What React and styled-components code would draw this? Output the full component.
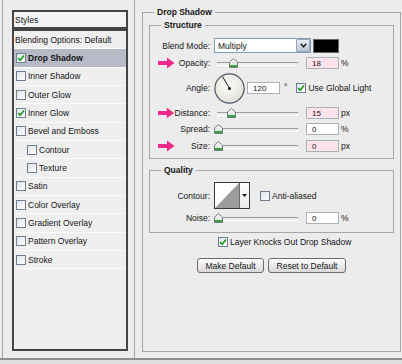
import React from 'react';
import styled, { createGlobalStyle } from 'styled-components';

const Global = createGlobalStyle`
  html, body { margin: 0; padding: 0; background: #ececec; }
  body { font-family: "Liberation Sans", Arial, sans-serif; font-size: 8.5px; color: #151515; }
  * { box-sizing: border-box; }
`;

const Window = styled.div`
  width: 402px; height: 364px; background: #ececec; overflow: hidden;
  display: flex; flex-direction: column;
`;
const Main = styled.div`
  display: flex; height: 360px; border-bottom: 2px solid #8f8f8f;
`;
const Footer = styled.div`
  flex: 1; background: #dedede;
`;

/* ---------- left ---------- */
const LeftPanel = styled.div`
  margin-left: 2px; width: 133px;
  border-left: 1px solid #a4a4a4; border-right: 1px solid #a4a4a4;
  padding: 10px 6px 0 9px;
  display: flex; flex-direction: column;
`;
const StylesHeader = styled.div`
  height: 19px; border: 2px solid #454545; background: #f3f3f3;
  display: flex; align-items: center; padding-left: 1px;
`;
const StyleList = styled.div`
  height: 322px; border: 2px solid #454545; background: #efefef;
  display: flex; flex-direction: column;
`;
const ListRow = styled.div`
  height: 18.33px; flex: none; display: flex; align-items: center; gap: 2px;
  padding-left: ${p => (p.$indent ? 13 : p.$plain ? 1 : 2)}px;
  background: ${p => (p.$selected ? '#b7bbc8' : 'transparent')};
  border-bottom: 1px solid #fbfbfb;
  font-weight: ${p => (p.$selected ? 700 : 400)};
  white-space: nowrap;
`;

/* ---------- checkbox ---------- */
const Box = styled.span`
  width: 10px; height: 10px; flex: none;
  border: 1px solid #6e7f93;
  background: linear-gradient(135deg, #dfe3e8, #ffffff);
  display: inline-flex; align-items: center; justify-content: center;
`;
const Check = ({ checked }) => (
  <Box>
    {checked && (
      <svg width="8" height="8" viewBox="0 0 8 8">
        <path d="M1.2 4.1 L3.2 6.3 L7 1.4" fill="none" stroke="#1f9c23" strokeWidth="1.7" />
      </svg>
    )}
  </Box>
);

/* ---------- right ---------- */
const RightPanel = styled.div`
  padding: 6px 0 0 7px;
`;
const OuterSet = styled.fieldset`
  margin: 0; padding: 1px 6px 0 6px; width: 259px; height: 346px;
  border: 1px solid #a6a6a6; min-inline-size: 0;
`;
const GroupSet = styled.fieldset`
  margin: ${p => p.$top}px 0 0 0; padding: ${p => p.$pt}px 0 ${p => p.$pb}px 0;
  border: 1px solid #a6a6a6; min-inline-size: 0;
  display: flex; flex-direction: column; gap: 4px;
`;
const Legend = styled.legend`
  padding: 0 3px; margin-left: ${p => p.$offset}px;
  font-weight: 700; line-height: 12px; font-size: 8.5px;
`;
const FieldRow = styled.div`
  display: flex; align-items: center; height: ${p => p.$h}px;
  margin-top: ${p => p.$mt || 0}px;
`;
const Label = styled.div`
  width: 60px; flex: none; display: flex; align-items: center;
  justify-content: ${p => (p.$arrow ? 'space-between' : 'flex-end')};
  padding-left: ${p => (p.$arrow ? 8 : 0)}px;
  white-space: nowrap;
`;
const Controls = styled.div`
  margin-left: 4px; display: flex; align-items: center;
`;

const Select = styled.div`
  width: 97px; height: 15px; background: #fff; border: 1px solid #7f9db9;
  display: flex; align-items: center; justify-content: space-between;
  padding-left: 3px;
`;
const DropBtn = styled.span`
  width: 14px; height: 13px; border: 1px solid #98a6ba; border-radius: 1px;
  background: linear-gradient(#e8ecf3, #bcc6d6);
  display: inline-flex; align-items: center; justify-content: center;
`;
const Swatch = styled.span`
  width: 26px; height: 14px; margin-left: 2px; background: #000; border: 1px solid #666;
`;

const NumBox = styled.span`
  width: 33px; height: 12px; margin-left: ${p => p.$ml}px;
  border: 1px solid #a9b1bb; background: ${p => (p.$pink ? '#fde3ec' : '#ffffff')};
  display: inline-flex; align-items: center; padding-left: 5px; font-size: 8px;
`;
const Unit = styled.span`
  margin-left: 2px; font-size: 8.5px;
`;

const SliderWrap = styled.div`
  position: relative; width: 84px; height: 12px; flex: none;
  &::before {
    content: ''; position: absolute; left: 3px; right: 0; top: 5px; height: 2px;
    border-top: 1px solid #9b9b9b; border-bottom: 1px solid #ffffff;
  }
`;
const ThumbSvg = styled.svg`
  position: absolute; top: 1px;
`;
const Slider = ({ pos }) => (
  <SliderWrap>
    <ThumbSvg width="9" height="10" viewBox="0 0 9 10" style={{ left: `${pos}px` }}>
      <defs>
        <linearGradient id={`tg${pos}`} x1="0" y1="0" x2="0" y2="1">
          <stop offset="0" stopColor="#ffffff" />
          <stop offset="1" stopColor="#cfd3d8" />
        </linearGradient>
      </defs>
      <path d="M0.5 9.5 V4 L4.5 0.6 L8.5 4 V9.5 Z" fill={`url(#tg${pos})`} stroke="#6f7c88" strokeWidth="1" />
      <rect x="1" y="7" width="7" height="2" fill="#3aa33a" />
    </ThumbSvg>
  </SliderWrap>
);

const PinkArrow = () => (
  <svg width="17" height="12" viewBox="0 0 17 12">
    <path d="M0 4 H9 V0.5 L16.5 6 L9 11.5 V8 H0 Z" fill="#ef2a8c" />
  </svg>
);

const Dial = () => (
  <svg width="31" height="31" viewBox="0 0 31 31">
    <defs>
      <radialGradient id="dialg" cx="45%" cy="40%" r="70%">
        <stop offset="0" stopColor="#fefefe" />
        <stop offset="1" stopColor="#dedbd2" />
      </radialGradient>
    </defs>
    <circle cx="15.5" cy="15.5" r="14.6" fill="url(#dialg)" stroke="#4d5866" strokeWidth="1.2" />
    <line x1="15.5" y1="15.5" x2="8.7" y2="3.8" stroke="#111" strokeWidth="1" />
    <circle cx="15.5" cy="15.5" r="1.5" fill="#111" />
  </svg>
);

const Degree = styled.span`
  margin-left: 4px; margin-right: 9px; font-size: 8.5px; align-self: flex-start; margin-top: 9px;
`;
const CheckLabel = styled.label`
  display: inline-flex; align-items: center; gap: 2px; white-space: nowrap;
  margin-left: ${p => p.$ml || 0}px;
`;

const ContourBox = styled.div`
  width: 36px; height: 27px; border: 1px solid #3a3a3a; display: flex; background: #fff;
`;
const ContourPreview = styled.div`
  width: 25px; height: 100%; border-right: 1px solid #6a6a6a;
`;
const ContourDrop = styled.div`
  flex: 1; display: flex; align-items: center; justify-content: center;
  background: linear-gradient(#ffffff, #ececec);
`;

const KnockRow = styled.div`
  display: flex; align-items: center; height: 11px; margin-top: 3px; padding-left: 69px;
`;
const ButtonRow = styled.div`
  display: flex; justify-content: center; gap: 4px; margin-top: 11px;
`;
const Button = styled.button`
  width: ${p => p.$w}px; height: 15px; padding: 0;
  border: 1px solid #6b6b6b; border-radius: 3px;
  background: linear-gradient(#fdfdfd, #d9d9d9);
  font-family: "Liberation Sans", Arial, sans-serif; font-size: 8.5px; color: #151515;
`;

const rows = [
  { label: 'Blending Options: Default', plain: true },
  { label: 'Drop Shadow', checked: true, selected: true },
  { label: 'Inner Shadow' },
  { label: 'Outer Glow' },
  { label: 'Inner Glow', checked: true },
  { label: 'Bevel and Emboss' },
  { label: 'Contour', indent: true },
  { label: 'Texture', indent: true },
  { label: 'Satin' },
  { label: 'Color Overlay' },
  { label: 'Gradient Overlay' },
  { label: 'Pattern Overlay' },
  { label: 'Stroke' },
];

const SliderField = ({ label, arrow, pos, value, pink, unit, mt }) => (
  <FieldRow $h={12} $mt={mt}>
    <Label $arrow={arrow}>
      {arrow && <PinkArrow />}
      <span>{label}</span>
    </Label>
    <Controls>
      <Slider pos={pos} />
      <NumBox $ml={8} $pink={pink}>{value}</NumBox>
      <Unit>{unit}</Unit>
    </Controls>
  </FieldRow>
);

export default function App() {
  return (
    <Window>
      <Global />
      <Main>
        <LeftPanel>
          <StylesHeader>Styles</StylesHeader>
          <StyleList>
            {rows.map(r => (
              <ListRow key={r.label} $plain={r.plain} $indent={r.indent} $selected={r.selected}>
                {!r.plain && <Check checked={r.checked} />}
                <span>{r.label}</span>
              </ListRow>
            ))}
          </StyleList>
        </LeftPanel>
        <RightPanel>
          <OuterSet>
            <Legend $offset={5}>Drop Shadow</Legend>
            <GroupSet $top={0} $pt={7} $pb={6}>
              <Legend $offset={11}>Structure</Legend>
              <FieldRow $h={15}>
                <Label>Blend Mode:</Label>
                <Controls>
                  <Select>
                    <span>Multiply</span>
                    <DropBtn>
                      <svg width="7" height="5" viewBox="0 0 7 5">
                        <path d="M0.8 0.8 L3.5 3.8 L6.2 0.8" fill="none" stroke="#222" strokeWidth="1.5" />
                      </svg>
                    </DropBtn>
                  </Select>
                  <Swatch />
                </Controls>
              </FieldRow>
              <SliderField label="Opacity:" arrow pos={15} value="18" pink unit="%" />
              <FieldRow $h={30}>
                <Label>Angle:</Label>
                <Controls>
                  <Dial />
                  <NumBox $ml={2}>120</NumBox>
                  <Degree>°</Degree>
                  <CheckLabel>
                    <Check checked />
                    <span>Use Global Light</span>
                  </CheckLabel>
                </Controls>
              </FieldRow>
              <SliderField label="Distance:" arrow pos={13} value="15" pink unit="px" />
              <SliderField label="Spread:" pos={0} value="0" unit="%" />
              <SliderField label="Size:" arrow pos={0} value="0" pink unit="px" mt={1} />
            </GroupSet>
            <GroupSet $top={5} $pt={6} $pb={8} style={{ gap: '3px' }}>
              <Legend $offset={11}>Quality</Legend>
              <FieldRow $h={27}>
                <Label>Contour:</Label>
                <Controls>
                  <ContourBox>
                    <ContourPreview>
                      <svg width="24" height="25" viewBox="0 0 24 25">
                        <polygon points="0,25 24,0 24,25" fill="#9c9c9c" />
                      </svg>
                    </ContourPreview>
                    <ContourDrop>
                      <svg width="5" height="3" viewBox="0 0 5 3">
                        <polygon points="0,0 5,0 2.5,3" fill="#111" />
                      </svg>
                    </ContourDrop>
                  </ContourBox>
                  <CheckLabel $ml={10}>
                    <Check />
                    <span>Anti-aliased</span>
                  </CheckLabel>
                </Controls>
              </FieldRow>
              <SliderField label="Noise:" pos={0} value="0" unit="%" />
            </GroupSet>
            <KnockRow>
              <CheckLabel>
                <Check checked />
                <span>Layer Knocks Out Drop Shadow</span>
              </CheckLabel>
            </KnockRow>
            <ButtonRow>
              <Button $w={67}>Make Default</Button>
              <Button $w={78}>Reset to Default</Button>
            </ButtonRow>
          </OuterSet>
        </RightPanel>
      </Main>
      <Footer />
    </Window>
  );
}
